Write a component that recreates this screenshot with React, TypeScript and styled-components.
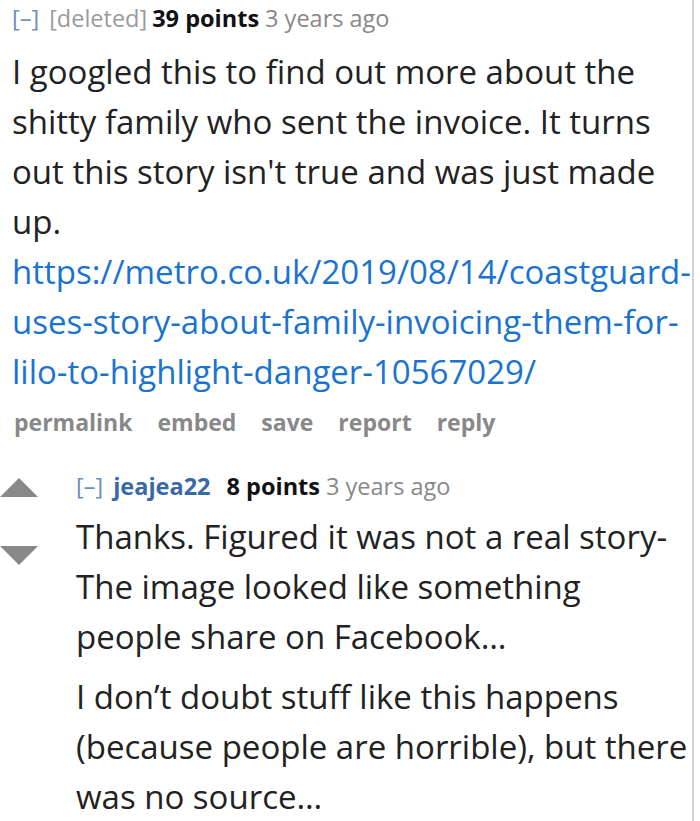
import React from 'react'
import styled, { createGlobalStyle } from 'styled-components'

const GlobalStyle = createGlobalStyle`
    html, body {
        margin: 0;
        padding: 0;
        background: #fff;
    }
    body {
        font-family: "Open Sans", "Noto Sans", "DejaVu Sans", sans-serif;
        color: #222;
    }
`

const Page = styled.div`
    display: flex;
    height: 821px;
    overflow: hidden;
`

const Thread = styled.div`
    width: 694px;
    flex-shrink: 0;
    border-right: 2px solid #d4d4d4;
    box-sizing: border-box;
`

const CommentBox = styled.div`
    padding-left: 12px;
    padding-top: 3px;
`

const Tagline = styled.div`
    font-size: 23.5px;
    line-height: 30px;
    color: #888;
    white-space: nowrap;
`

const Expand = styled.span`
    color: #6a8fc0;
    margin-right: 10px;
`

const Author = styled.span<{ deleted?: boolean }>`
    color: ${props => props.deleted ? '#9a9a9a' : '#3768a8'};
    font-weight: ${props => props.deleted ? 400 : 700};
    margin-right: ${props => props.deleted ? '5px' : '16px'};
`

const Score = styled.span`
    color: #111;
    font-weight: 700;
    margin-right: 6px;
`

const Body = styled.div`
    margin-top: 14px;
    font-size: 33px;
    line-height: 50px;
    white-space: nowrap;

    p {
        margin: 0 0 10px;
    }
    a {
        color: #1a73d0;
        text-decoration: none;
    }
`

const Buttons = styled.ul`
    display: flex;
    gap: 25px;
    list-style: none;
    margin: 2px 0 0 2px;
    padding: 0;
    font-size: 23px;
    line-height: 30px;
    font-weight: 700;
    color: #888;
`

const Child = styled.div`
    display: flex;
    margin-top: 34px;
`

const Votes = styled.div`
    width: 76px;
    flex-shrink: 0;
    display: flex;
    flex-direction: column;
    gap: 49px;
    padding-top: 7px;
`

const Arrow = styled.div<{ down?: boolean }>`
    width: 0;
    height: 0;
    border-left: 19px solid transparent;
    border-right: 19px solid transparent;
    ${props => props.down
        ? 'border-top: 19px solid #888;'
        : 'border-bottom: 19px solid #888;'}
`

const ChildContent = styled.div`
    ${Body} {
        margin-top: 11px;
    }
`

const App: React.FC = () => {
    return (
        <Page>
            <GlobalStyle />
            <Thread>
                <CommentBox>
                    <Tagline>
                        <Expand>[–]</Expand>
                        <Author deleted>[deleted]</Author>
                        <Score>39 points</Score>
                        3 years ago
                    </Tagline>
                    <Body>
                        <p>
                            I googled this to find out more about the<br />
                            shitty family who sent the invoice. It turns<br />
                            out this story isn't true and was just made<br />
                            up.<br />
                            <a href="#">
                                https://metro.co.uk/2019/08/14/coastguard-<br />
                                uses-story-about-family-invoicing-them-for-<br />
                                lilo-to-highlight-danger-10567029/
                            </a>
                        </p>
                    </Body>
                    <Buttons>
                        <li>permalink</li>
                        <li>embed</li>
                        <li>save</li>
                        <li>report</li>
                        <li>reply</li>
                    </Buttons>
                </CommentBox>
                <Child>
                    <Votes>
                        <Arrow />
                        <Arrow down />
                    </Votes>
                    <ChildContent>
                        <Tagline>
                            <Expand>[–]</Expand>
                            <Author>jeajea22</Author>
                            <Score>8 points</Score>
                            3 years ago
                        </Tagline>
                        <Body>
                            <p>
                                Thanks. Figured it was not a real story-<br />
                                The image looked like something<br />
                                people share on Facebook…
                            </p>
                            <p>
                                I don’t doubt stuff like this happens<br />
                                (because people are horrible), but there<br />
                                was no source…
                            </p>
                        </Body>
                    </ChildContent>
                </Child>
            </Thread>
        </Page>
    )
}

export default App
